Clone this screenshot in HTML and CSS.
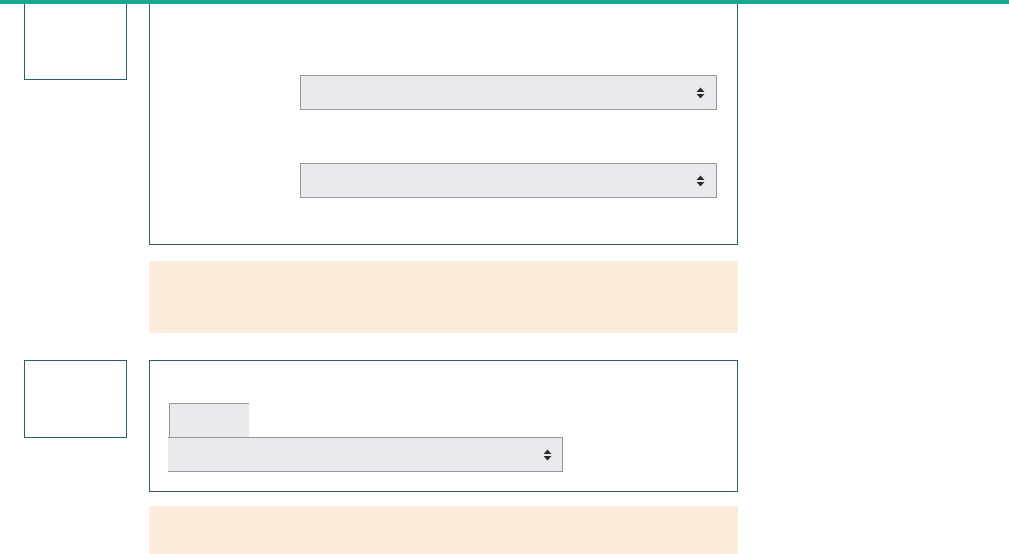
FILE: index.html
```html
<!DOCTYPE html>
<html lang="en">
<head>
  <meta charset="UTF-8">
  <title>Settings</title>
  <meta name="viewport" content="width=device-width, initial-scale=1.0">
  <link rel="stylesheet" href="styles.css">
</head>
<body>
  <div class="top-bar"></div>

  <div class="page">
    <div class="section first">
      <div class="side-box"></div>
      <div class="panel">
        <div class="form-row">
          <label class="form-label" for="opt1"></label>
          <div class="select-wrap">
            <select id="opt1" class="select"><option></option></select>
            <svg class="arrows" width="9" height="12" viewBox="0 0 9 12"><path d="M4.5 0.5 L8.5 5 H0.5 Z M4.5 11.5 L8.5 7 H0.5 Z" fill="#2b2b2b"/></svg>
          </div>
        </div>
        <div class="form-row">
          <label class="form-label" for="opt2"></label>
          <div class="select-wrap">
            <select id="opt2" class="select"><option></option></select>
            <svg class="arrows" width="9" height="12" viewBox="0 0 9 12"><path d="M4.5 0.5 L8.5 5 H0.5 Z M4.5 11.5 L8.5 7 H0.5 Z" fill="#2b2b2b"/></svg>
          </div>
        </div>
      </div>
    </div>
    <div class="notice"></div>

    <div class="section second">
      <div class="side-box"></div>
      <div class="panel panel-small">
        <div class="tab"></div>
        <div class="select-wrap narrow">
          <select class="select select-joined"><option></option></select>
          <svg class="arrows" width="9" height="12" viewBox="0 0 9 12"><path d="M4.5 0.5 L8.5 5 H0.5 Z M4.5 11.5 L8.5 7 H0.5 Z" fill="#2b2b2b"/></svg>
        </div>
      </div>
    </div>
    <div class="notice notice-last"></div>
  </div>
</body>
</html>
```

FILE: styles.css
```css
body {
  margin: 0;
  padding: 0;
  font-family: 'Liberation Sans', Arial, sans-serif;
  background: #fff;
  overflow: hidden;
}
.top-bar {
  height: 4px;
  background-color: #18a992; /* brand teal */
}
.page {
  padding-left: 24px;
  width: 714px;
}
.section {
  display: flex;
  align-items: flex-start;
  gap: 22px;
}
.side-box {
  width: 101px;
  height: 76px;
  border: 1px solid #2e5d6c;
  flex: none;
}
.first .side-box {
  border-top: none;
  height: 75px;
}
.panel {
  flex: 1;
  border: 1px solid #2e5d6c;
  border-top: none;
  padding: 71px 20px 46px 150px;
  display: flex;
  flex-direction: column;
  gap: 53px;
}
.form-row {
  display: flex;
}
.form-label {
  display: none;
}
.select-wrap {
  position: relative;
  flex: 1;
}
.select {
  display: block;
  width: 100%;
  height: 35px;
  margin: 0;
  -webkit-appearance: none;
  appearance: none;
  background-color: #e8eaed;
  border: 1px solid #979797;
  border-radius: 0;
  font-size: 14px;
}
.arrows {
  position: absolute;
  right: 12px;
  top: 12px;
  pointer-events: none;
}
.notice {
  margin: 16px 0 27px 125px;
  height: 72px;
  background-color: #fcecdb; /* warm notice */
}
.notice-last {
  margin-top: 14px;
  margin-bottom: 0;
  height: 60px;
}
.second .panel {
  border-top: 1px solid #2e5d6c;
  padding: 42px 20px 19px 18px;
  gap: 0;
  align-items: flex-start;
}
.tab {
  width: 79px;
  height: 33px;
  margin-left: 1px;
  background-color: #e8eaed;
  border-top: 1px solid #979797;
  border-left: 1px solid #979797;
}
.select-wrap.narrow {
  flex: none;
  width: 395px;
}
.select-joined {
  border-left: none;
}
.narrow .arrows {
  right: 11px;
}
```
